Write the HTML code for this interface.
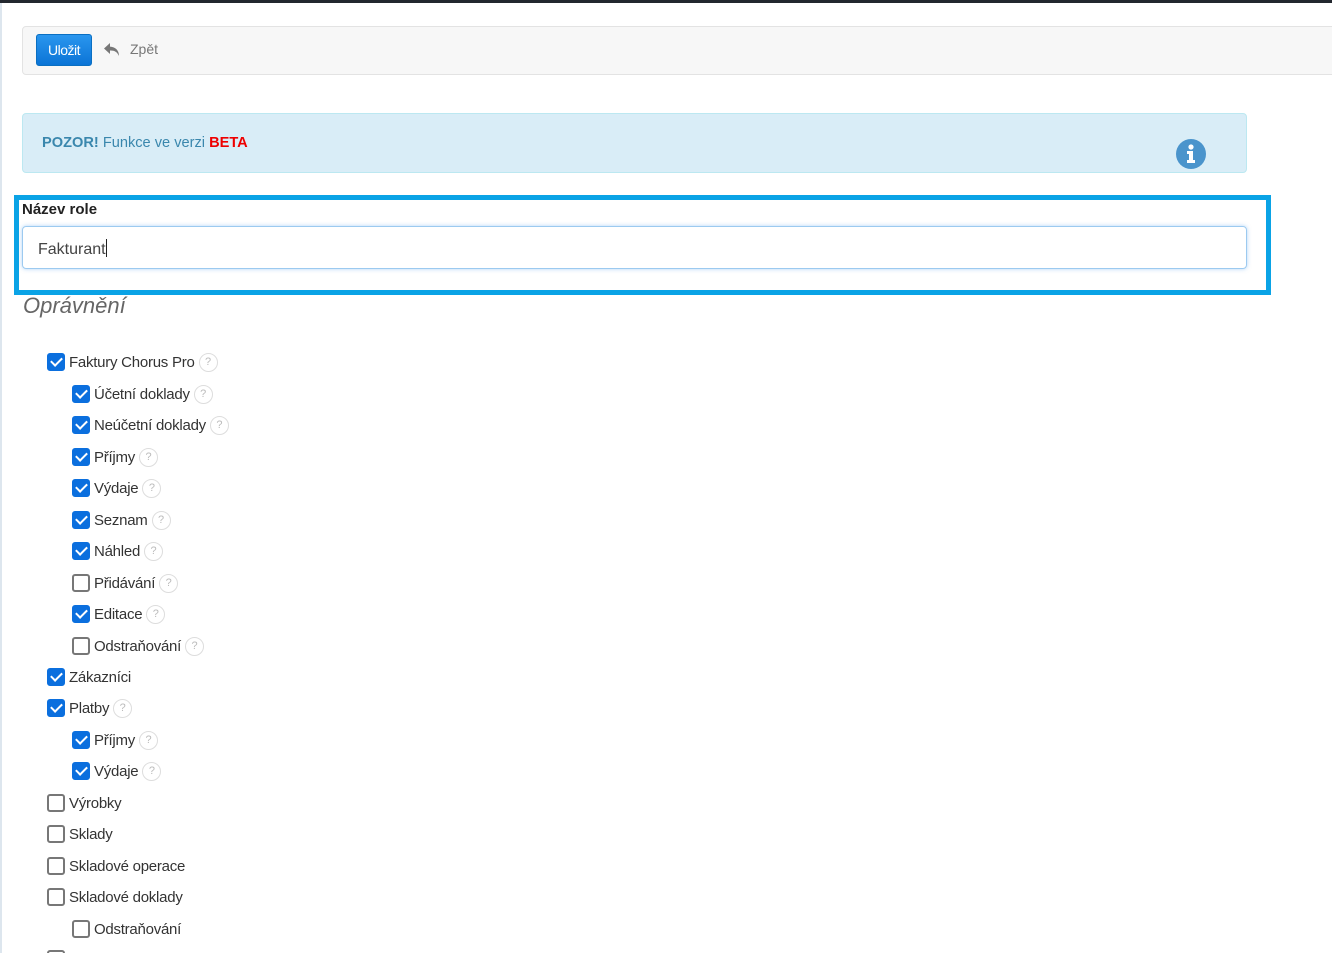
<!DOCTYPE html>
<html style="height:953px;overflow:hidden"><head><meta charset="utf-8"><style>
body{margin:0;width:1332px;height:953px;overflow:hidden;background:#fff;font-family:"Liberation Sans",sans-serif;position:relative}
.topbar{position:absolute;left:0;top:0;width:1332px;height:3px;background:#22272e}
.lline{position:absolute;left:0;top:3px;width:2px;height:950px;background:#dde6ee}
.toolbar{position:absolute;left:22px;top:26px;width:1320px;height:47px;background:#f7f7f7;border:1px solid #e3e3e3;border-radius:4px}
.btn{position:absolute;left:36px;top:34px;width:54px;height:30px;border:1px solid #0a6fc2;border-radius:3px;background:linear-gradient(#2a96ee,#0b74d6);color:#fff;font-size:14px;line-height:30px;text-align:center;letter-spacing:-0.5px}
.back{position:absolute;left:130px;top:41px;color:#777;font-size:14px}
.alert{position:absolute;left:22px;top:113px;width:1223px;height:58px;background:#d9edf7;border:1px solid #bce8f1;border-radius:4px}
.alert .t{position:absolute;left:19px;top:21px;font-size:14.6px;color:#3a87ad}
.hl{position:absolute;left:14px;top:195px;width:1247px;height:90px;border:5px solid #0aa3e6}
.lab{position:absolute;left:22px;top:201px;font-size:15px;font-weight:bold;color:#222}
.inp{position:absolute;left:22px;top:226px;width:1223px;height:41px;border:1px solid #9ccaf0;border-radius:4px;box-shadow:0 0 4px rgba(100,170,240,.5)}
.inp span{position:absolute;left:15px;top:12px;font-size:16px;color:#444}
.inp span:after{content:"";display:inline-block;width:1px;height:18px;background:#222;vertical-align:-3px}
h2{position:absolute;left:23px;top:293px;margin:0;font-size:22px;font-style:italic;font-weight:normal;color:#666}
.r{position:absolute;height:20px;font-size:15px;letter-spacing:-0.25px;color:#333;display:flex;align-items:center;white-space:nowrap}
.cb{width:14px;height:14px;border:2px solid #777;border-radius:3px;margin-right:4px;box-sizing:content-box;background:#fff;position:relative}
.cb.c{background:#0b6fde;border-color:#0b6fde}
.cb.c:after{content:"";position:absolute;left:4px;top:0px;width:5px;height:9px;border:solid #fff;border-width:0 2.5px 2.5px 0;transform:rotate(45deg)}
.q{display:inline-block;width:17px;height:17px;border:1px solid #ddd;border-radius:50%;font-size:11px;color:#bbb;text-align:center;line-height:17px;margin-left:4px;letter-spacing:0}
</style></head><body>
<div class="topbar"></div><div class="lline"></div>
<div class="toolbar"></div>
<div class="btn">Uložit</div>
<svg style="position:absolute;left:103px;top:42px" width="18" height="16" viewBox="0 0 18 16"><path d="M7 1 L1 6.5 L7 12 L7 8.5 C11 8.3 14 9.5 16 14 C16 8 12 4.8 7 4.6 Z" fill="#777"/></svg>
<div class="back">Zpět</div>
<div class="alert"><div class="t"><b>POZOR!</b> Funkce ve verzi <b style="color:#e00">BETA</b></div>
<svg style="position:absolute;left:1153px;top:25px" width="30" height="30" viewBox="0 0 30 30"><circle cx="15" cy="15" r="15" fill="#4a94cc"/><circle cx="15" cy="8" r="2.6" fill="#fff"/><path d="M11 12h6v9h2v3h-8v-3h2v-6h-2z" fill="#fff"/></svg></div>
<div class="hl"></div>
<div class="lab">Název role</div>
<div class="inp"><span>Fakturant</span></div>
<h2>Oprávnění</h2>
<div class="r" style="left:47px;top:352px"><i class="cb c"></i>Faktury Chorus Pro<span class="q">?</span></div>
<div class="r" style="left:72px;top:384px"><i class="cb c"></i>Účetní doklady<span class="q">?</span></div>
<div class="r" style="left:72px;top:415px"><i class="cb c"></i>Neúčetní doklady<span class="q">?</span></div>
<div class="r" style="left:72px;top:447px"><i class="cb c"></i>Příjmy<span class="q">?</span></div>
<div class="r" style="left:72px;top:478px"><i class="cb c"></i>Výdaje<span class="q">?</span></div>
<div class="r" style="left:72px;top:510px"><i class="cb c"></i>Seznam<span class="q">?</span></div>
<div class="r" style="left:72px;top:541px"><i class="cb c"></i>Náhled<span class="q">?</span></div>
<div class="r" style="left:72px;top:573px"><i class="cb"></i>Přidávání<span class="q">?</span></div>
<div class="r" style="left:72px;top:604px"><i class="cb c"></i>Editace<span class="q">?</span></div>
<div class="r" style="left:72px;top:636px"><i class="cb"></i>Odstraňování<span class="q">?</span></div>
<div class="r" style="left:47px;top:667px"><i class="cb c"></i>Zákazníci</div>
<div class="r" style="left:47px;top:698px"><i class="cb c"></i>Platby<span class="q">?</span></div>
<div class="r" style="left:72px;top:730px"><i class="cb c"></i>Příjmy<span class="q">?</span></div>
<div class="r" style="left:72px;top:761px"><i class="cb c"></i>Výdaje<span class="q">?</span></div>
<div class="r" style="left:47px;top:793px"><i class="cb"></i>Výrobky</div>
<div class="r" style="left:47px;top:824px"><i class="cb"></i>Sklady</div>
<div class="r" style="left:47px;top:856px"><i class="cb"></i>Skladové operace</div>
<div class="r" style="left:47px;top:887px"><i class="cb"></i>Skladové doklady</div>
<div class="r" style="left:72px;top:919px"><i class="cb"></i>Odstraňování</div>
<div class="r" style="left:47px;top:949px"><i class="cb"></i></div>
</body></html>
